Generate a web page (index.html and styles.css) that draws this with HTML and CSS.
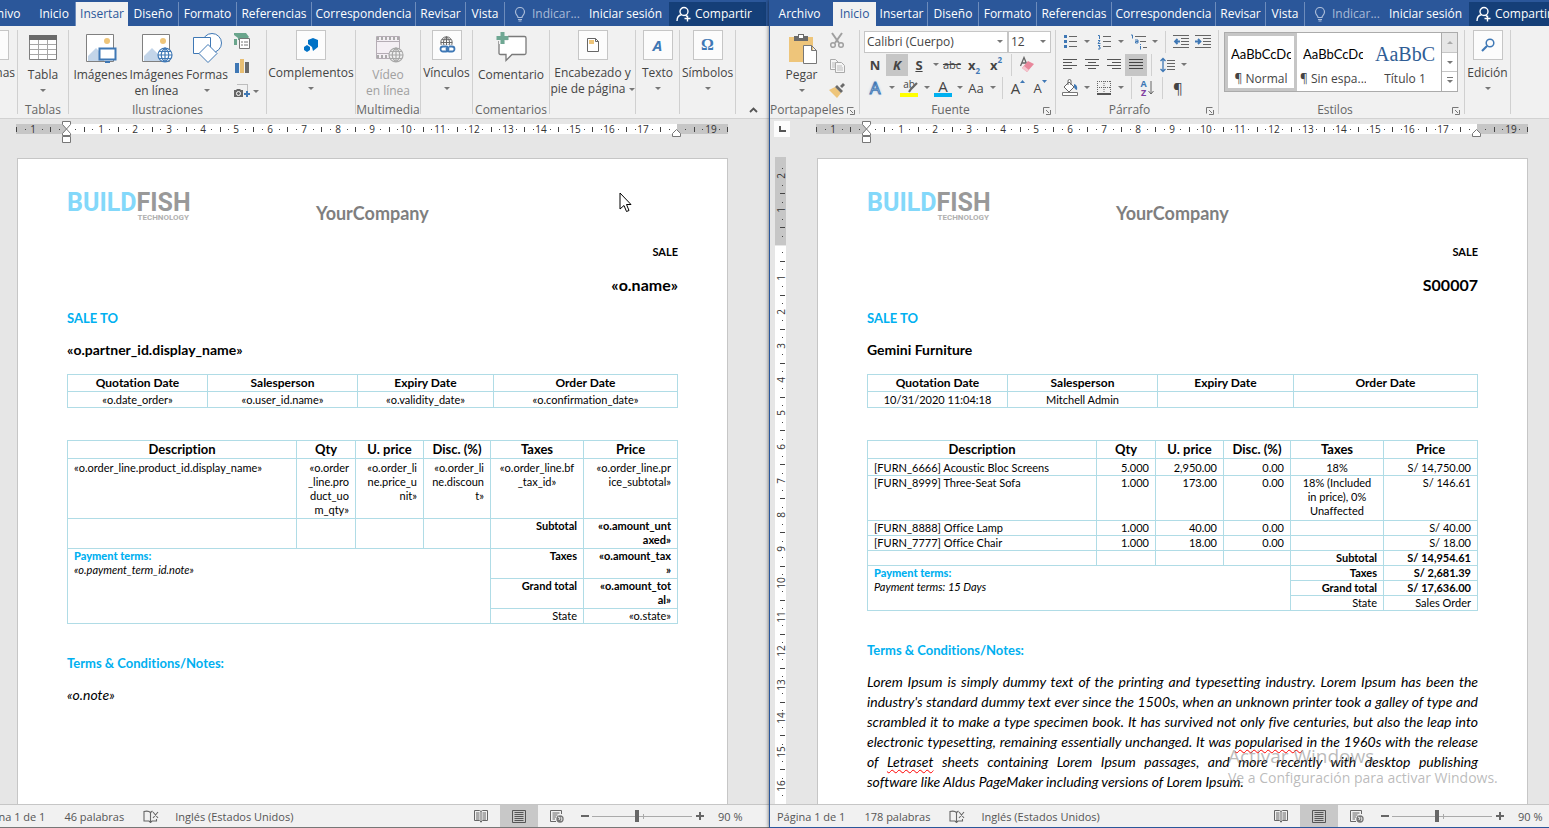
FILE: index.html
```html
<!DOCTYPE html>
<html lang="es">
<head>
    <meta charset="utf-8">
    <title>Word</title>
    <link rel="stylesheet" href="styles.css">
</head>
<body>
    <!-- shared icons -->
    <svg class="defs">
        <symbol id="i-launch" viewBox="0 0 8 8"><path d="M.5 6.500V.5h6M3 3l3 3M7.500 3v4.500H3" fill="none" stroke="#777"/></symbol>
        <symbol id="i-bulb" viewBox="0 0 12 15"><path d="M4 10.500C4 8.500 1.500 8 1.500 5a4.500 4.500 0 0 1 9 0c0 3-2.500 3.500-2.500 5.500zM4 12.500h4M4.500 14h3" fill="none" stroke="#a9bbd8" stroke-width="1.200"/></symbol>
        <symbol id="i-user" viewBox="0 0 16 16"><path d="M1 15c0-4 2-6 5-6.500M8 1.500a4 4 0 1 1 0 8 4 4 0 0 1 0-8M10 9.500l1 1M11.500 9.500v6M8.500 12.500h6" fill="none" stroke="#fff" stroke-width="1.400"/></symbol>
        <symbol id="i-spell" viewBox="0 0 16 13"><path d="M7.500 2.500v9.500M7.500 2.500C6 1 3 1 1 1.500v9.500h5l1.500 1.500L9 11h4.500V9M7.500 2.500L9.500 1M10 2l5 6M15 2l-5 6" fill="none" stroke="#666" stroke-width="1.100"/></symbol>
        <symbol id="i-read" viewBox="0 0 14 13"><path d="M7 1.500v11M7 1.500L5.500.5h-5v10h5L7 12l1.500-1.500h5V.5h-5zM2 3h3.500M2 5h3.500M2 7h3.500M2 9h3.500M8.500 3H12M8.500 5H12M8.500 7H12M8.500 9H12" fill="none" stroke="#666"/></symbol>
        <symbol id="i-print" viewBox="0 0 14 13"><path d="M.5.5h13v12H.5zM2.500 2.500h9M2.500 4.500h9M2.500 6.500h9M2.500 8.500h9M2.500 10.500h9" fill="none" stroke="#555"/></symbol>
        <symbol id="i-web" viewBox="0 0 14 13"><path d="M6 11.500H.5V.5h11V4M2.500 3h7M2.500 5h5M2.500 7H6M2.500 9H5" fill="none" stroke="#666"/><circle cx="10" cy="9" r="3.700" fill="#777"/><path d="M8 7l2 1-1 2M11 7l1 2-1 2" fill="none" stroke="#eee"/></symbol>
        <symbol id="i-globe" viewBox="0 0 16 16"><path d="M8 1a7 7 0 1 1 0 14A7 7 0 0 1 8 1M8 1v14M1 8h14M8 1c-5 4-5 10 0 14M8 1c5 4 5 10 0 14M2.500 4.500h11M2.500 11.500h11" fill="none" stroke="currentColor" stroke-width="1.200"/></symbol>
        <symbol id="i-picture" viewBox="0 0 30 30"><path d="M.5.5h27v27H.5z" fill="#fff" stroke="#808080"/><circle cx="21" cy="7" r="3" fill="#eec57a"/><path d="M2 27v-5l8-8 8 8v5z" fill="#c3d5e9"/></symbol>
    </svg>

    <div class="desktop">
        <section class="window">
            <nav class="tabs">
                <button class="tab file">Archivo</button>
                <button class="tab inicio">Inicio</button>
                <button class="tab insertar active">Insertar</button>
                <button class="tab diseno">Diseño</button>
                <button class="tab formato">Formato</button>
                <button class="tab referencias">Referencias</button>
                <button class="tab correspondencia">Correspondencia</button>
                <button class="tab revisar">Revisar</button>
                <button class="tab vista">Vista</button>
                <button class="tell"><svg width="12" height="15"><use href="#i-bulb"/></svg>Indicar...</button>
                <button class="signin">Iniciar sesión</button>
                <button class="share"><svg width="16" height="16"><use href="#i-user"/></svg>Compartir</button>
            </nav>
            <div class="ribbon">
                <div class="group g-paginas">
                    <button class="big boxed"><span class="box"></span>Páginas<i class="caret"></i></button>
                </div>
                <div class="group g-tablas">
                    <div class="items">
                        <button class="big">
                            <svg width="30" height="32" viewBox="0 0 30 32"><path d="M1.500 8h27v21.500h-27z" fill="#fff" stroke="#808080"/><path d="M1 5h28v5H1z" fill="#6a6a6a"/><path d="M2 14.500h26M2 19.500h26M2 24.500h26M10.500 10v19M19.500 10v19" stroke="#a6a6a6"/></svg>
                            Tabla<i class="caret"></i>
                        </button>
                    </div>
                    <span class="label">Tablas</span>
                </div>
                <div class="group g-ilustraciones">
                    <div class="items">
                        <button class="big wide">
                            <svg width="32" height="32" viewBox="0 0 32 32"><use href="#i-picture" x="1" y="4" width="30" height="30"/><path d="M14.500 18.500h16v11h-16z" fill="#fff" stroke="#3f78b5" stroke-width="2"/><path d="M20 32h5" stroke="#3f78b5" stroke-width="2"/></svg>
                            Imágenes
                        </button>
                        <button class="big wide">
                            <svg width="32" height="32" viewBox="0 0 32 32"><use href="#i-picture" x="1" y="4" width="30" height="30"/><circle cx="24" cy="25" r="7" fill="#fff"/><use href="#i-globe" x="16" y="17" width="16" height="16" color="#3f78b5"/></svg>
                            Imágenes<br>en línea
                        </button>
                        <button class="big formas">
                            <svg width="32" height="32" viewBox="0 0 32 32"><circle cx="21" cy="13" r="9.500" fill="#fff" stroke="#3f78b5"/><path d="M2.500 7.500h17v16h-17z" fill="#fff" stroke="#3f78b5"/><path d="M17 14.500l9 9-9 9-9-9z" fill="#fff" stroke="#3f78b5"/></svg>
                            Formas<i class="caret"></i>
                        </button>
                        <div class="stack">
                            <button><svg width="18" height="18" viewBox="0 0 18 18"><path d="M1 2h12l3 4-3 3H5V7L1 4zM1 8h3v6H1z" fill="#6aa58c"/><path d="M6.500 7.500h10v10h-10z" fill="#fff" stroke="#777"/><path d="M8 11h2M8 14h2M11 11h4M11 14h4" stroke="#777"/></svg></button>
                            <button><svg width="18" height="18" viewBox="0 0 18 18"><path d="M2 6h4v10H2z" fill="#3f78b5"/><path d="M7 2h4v14H7z" fill="#e8be72"/><path d="M12 5h4v11h-4z" fill="#6a6a6a"/></svg></button>
                            <button><svg width="18" height="18" viewBox="0 0 18 18"><path d="M4.500 2.500h10v8" fill="none" stroke="#888" stroke-dasharray="1 1"/><path d="M1 8h2l1-1h3l1 1h2v7H1z" fill="#666"/><circle cx="5.500" cy="11.500" r="2" fill="#666" stroke="#fff"/><path d="M14 9v6M11 12h6" stroke="#3f78b5" stroke-width="2"/></svg><i class="caret"></i></button>
                        </div>
                    </div>
                    <span class="label">Ilustraciones</span>
                </div>
                <div class="group g-complementos">
                    <button class="big boxed">
                        <span class="box"><svg width="16" height="16" viewBox="0 0 16 16"><path d="M5 3l5-2 5 2v7l-5 4-1-4-4-3z" fill="#0072c6"/><path d="M1 10l3-2 3 2v3l-3 2-3-2z" fill="#0072c6"/></svg></span>
                        Complementos<i class="caret"></i>
                    </button>
                </div>
                <div class="group g-multimedia">
                    <div class="items">
                        <button class="big" disabled>
                            <svg width="32" height="32" viewBox="0 0 32 32"><path d="M4.500 6.500h23v22h-23z" fill="#f4eff4" stroke="#b5adb5"/><path d="M5 8.500h22M5 26.500h12" stroke="#aaa" stroke-width="3" stroke-dasharray="2 2"/><path d="M5 11.500h22M5 23.500h12" stroke="#b5adb5"/><circle cx="24" cy="25" r="7" fill="#f1f1f1"/><use href="#i-globe" x="16" y="17" width="16" height="16" color="#a8a8a8"/></svg>
                            Vídeo<br>en línea
                        </button>
                    </div>
                    <span class="label">Multimedia</span>
                </div>
                <div class="group g-vinculos">
                    <button class="big boxed">
                        <span class="box"><svg width="18" height="18" viewBox="0 0 18 18"><use href="#i-globe" x="2" y="0" width="13" height="13" color="#666"/><path d="M1 9h16v9H1z" fill="#fff"/><path d="M5 10.500h3a2.500 2.500 0 0 1 0 5H5a2.500 2.500 0 0 1 0-5M11 10.500h3a2.500 2.500 0 0 1 0 5h-3a2.500 2.500 0 0 1-2-4" fill="none" stroke="#3f78b5" stroke-width="1.800"/></svg></span>
                        Vínculos<i class="caret"></i>
                    </button>
                </div>
                <div class="group g-comentarios">
                    <div class="items">
                        <button class="big">
                            <svg width="32" height="32" viewBox="0 0 32 32"><path d="M5.500 6.500h24q1.500 0 1.500 1.500v15q0 1.500-1.500 1.500H17l-6 6v-6H5.500Q4 24.500 4 23V8q0-1.500 1.500-1.500z" fill="#fff" stroke="#7a7a7a" stroke-width="1.300"/><path d="M7 2v12M1 8h12" stroke="#f1f1f1" stroke-width="6"/><path d="M7.500 2v12M1.500 8h12" stroke="#6fa793" stroke-width="4"/></svg>
                            Comentario
                        </button>
                    </div>
                    <span class="label">Comentarios</span>
                </div>
                <div class="group g-encabezado">
                    <button class="big boxed">
                        <span class="box"><svg width="12" height="16" viewBox="0 0 12 16"><path d="M.5 1.500h8l3 3v10H.5zM8.500 1.500v3h3" fill="#fff" stroke="#666"/><path d="M2 3h5v4H2z" fill="#eec57a"/></svg></span>
                        <span>Encabezado y<br>pie de página <i class="caret inline"></i></span>
                    </button>
                </div>
                <div class="group g-texto">
                    <button class="big boxed"><span class="box glyph-a">A</span>Texto<i class="caret"></i></button>
                </div>
                <div class="group g-simbolos">
                    <button class="big boxed"><span class="box glyph-omega">Ω</span>Símbolos<i class="caret"></i></button>
                </div>
                <button class="collapse"><svg width="9" height="6" viewBox="0 0 9 6"><path d="M1 5l3.500-3.500L8 5" fill="none" stroke="#555" stroke-width="1.800"/></svg></button>
            </div>
            <div class="ruler-bar">
                <span class="tab-stop"></span>
                <svg class="ruler" width="712" height="23"></svg>
            </div>
            <main class="workspace">
                <div class="side"></div>
                <article class="page">
                    <header class="doc-head">
                        <div class="logo"><b>BUILD</b><b class="fish">FISH</b><small>TECHNOLOGY</small></div>
                        <h1>YourCompany</h1>
                    </header>
                    <p class="kind">SALE</p>
                    <p class="number">«o.name»</p>
                    <h2>SALE TO</h2>
                    <p class="partner">«o.partner_id.display_name»</p>
                    <table class="dates">
                        <colgroup><col class="d1"><col class="d2"><col class="d3"><col></colgroup>
                        <tr><th>Quotation Date</th><th>Salesperson</th><th>Expiry Date</th><th>Order Date</th></tr>
                        <tr><td>«o.date_order»</td><td>«o.user_id.name»</td><td>«o.validity_date»</td><td>«o.confirmation_date»</td></tr>
                    </table>
                    <table class="lines">
                        <colgroup><col class="c1"><col class="c2"><col class="c3"><col class="c4"><col class="c5"><col></colgroup>
                        <tr><th>Description</th><th>Qty</th><th>U. price</th><th>Disc. (%)</th><th>Taxes</th><th>Price</th></tr>
                        <tr class="first tall"><td>«o.order_line.product_id.display_name»</td><td>«o.order<br>_line.pro<br>duct_uo<br>m_qty»</td><td>«o.order_li<br>ne.price_u<br>nit»</td><td>«o.order_li<br>ne.discoun<br>t»</td><td class="tax">«o.order_line.bf<br>_tax_id»</td><td>«o.order_line.pr<br>ice_subtotal»</td></tr>
                        <tr class="double total"><td></td><td></td><td></td><td></td><td>Subtotal</td><td>«o.amount_unt<br>axed»</td></tr>
                        <tr class="double total"><td colspan="4" rowspan="4" class="terms"><b>Payment terms:</b><br><i>«o.payment_term_id.note»</i></td><td>Taxes</td><td>«o.amount_tax<br>»</td></tr>
                        <tr class="double total"><td>Grand total</td><td>«o.amount_tot<br>al»</td></tr>
                        <tr><td>State</td><td>«o.state»</td></tr>
                    </table>
                    <h2 class="notes">Terms &amp; Conditions/Notes:</h2>
                    <p class="note">«o.note»</p>
                </article>
                <svg class="pointer" width="13" height="20" viewBox="0 0 13 20"><path d="M1 1v16l4-3.500 2.500 6 2.500-1-2.500-6H12z" fill="#fff" stroke="#000"/></svg>
            </main>
            <footer class="status">
                <span>Página 1 de 1</span>
                <span>46 palabras</span>
                <svg width="16" height="13"><use href="#i-spell"/></svg>
                <span>Inglés (Estados Unidos)</span>
                <div class="views">
                    <button><svg width="14" height="13"><use href="#i-read"/></svg></button>
                    <button class="on"><svg width="14" height="13"><use href="#i-print"/></svg></button>
                    <button><svg width="14" height="13"><use href="#i-web"/></svg></button>
                </div>
                <button class="zoom-btn minus"></button>
                <input type="range" class="zoom" min="10" max="190" value="90" aria-label="Zoom">
                <button class="zoom-btn plus"></button>
                <span class="percent">90 %</span>
            </footer>
        </section>

        <section class="window front">
            <nav class="tabs">
                <button class="tab file">Archivo</button>
                <button class="tab inicio active">Inicio</button>
                <button class="tab insertar">Insertar</button>
                <button class="tab diseno">Diseño</button>
                <button class="tab formato">Formato</button>
                <button class="tab referencias">Referencias</button>
                <button class="tab correspondencia">Correspondencia</button>
                <button class="tab revisar">Revisar</button>
                <button class="tab vista">Vista</button>
                <button class="tell"><svg width="12" height="15"><use href="#i-bulb"/></svg>Indicar...</button>
                <button class="signin">Iniciar sesión</button>
                <button class="share"><svg width="16" height="16"><use href="#i-user"/></svg>Compartir</button>
            </nav>
            <div class="ribbon">
                <div class="group has-launch g-portapapeles">
                    <div class="items">
                        <button class="big pegar">
                            <svg width="32" height="32" viewBox="0 0 32 32"><path d="M3 7h24v25H3z" fill="#eec57a"/><path d="M8 6h4V4h6v2h4v5H8z" fill="#6a6a6a"/><path d="M13 5h4v3h-4z" fill="#fff"/><path d="M17.500 15.500h8l5 5v13h-13zM25.500 15.500v5h5" fill="#fff" stroke="#777"/></svg>
                            Pegar<i class="caret"></i>
                        </button>
                        <div class="stack clip">
                            <button><svg width="16" height="18" viewBox="0 0 16 18"><path d="M3 2l7 10M13 2L6 12" stroke="#a0a0a0" stroke-width="2"/><circle cx="4" cy="14" r="2.300" fill="none" stroke="#a0a0a0" stroke-width="1.500"/><circle cx="12" cy="14" r="2.300" fill="none" stroke="#a0a0a0" stroke-width="1.500"/></svg></button>
                            <button><svg width="16" height="16" viewBox="0 0 16 16"><path d="M1.500 1.500h5l3 3v7h-8z" fill="#f6f6f6" stroke="#aaa"/><path d="M3 5h3M3 7h3M3 9h3" stroke="#bbb"/><path d="M6.500 4.500h6l3 3v7h-9z" fill="#f6f6f6" stroke="#aaa"/><path d="M8 8h5M8 10h6M8 12h6" stroke="#bbb"/></svg></button>
                            <button><svg width="16" height="16" viewBox="0 0 16 16"><path d="M0 8l6-3 6 6-4 5z" fill="#eec57a"/><path d="M6 5l2-2 6 6-2 2zM11 4l3-3 2 2-3 3z" fill="#6a6a6a"/></svg></button>
                        </div>
                    </div>
                    <span class="label">Portapapeles</span>
                    <svg class="launch" width="8" height="8"><use href="#i-launch"/></svg>
                </div>
                <div class="group has-launch g-fuente">
                    <div class="row combos">
                        <label class="combo font-name"><input type="text" value="Calibri (Cuerpo)" aria-label="Fuente"><i class="caret"></i></label>
                        <label class="combo font-size"><input type="text" value="12" aria-label="Tamaño"><i class="caret"></i></label>
                    </div>
                    <div class="row">
                        <button class="t bold">N</button>
                        <button class="t bold on"><em>K</em></button>
                        <button class="t bold"><u>S</u></button>
                        <button class="drop"><i class="caret"></i></button>
                        <button class="t strike"><s>abc</s></button>
                        <button class="t bold">x<sub>2</sub></button>
                        <button class="t bold">x<sup>2</sup></button>
                        <span class="bar"></span>
                        <button class="t"><svg width="16" height="18" viewBox="0 0 16 18"><path d="M1.500 10L5 1.500 8.500 10M3 7h4" fill="none" stroke="#666" stroke-width="1.300"/><path d="M3 12l6-7 6 3-7 8z" fill="#e8879b"/><path d="M3 12l2-2 5 4-2 2z" fill="#f4c4cd"/></svg></button>
                    </div>
                    <div class="row">
                        <button class="t effect">A</button>
                        <button class="drop"><i class="caret"></i></button>
                        <button class="t mark"><span>ab</span><svg width="10" height="11" viewBox="0 0 10 11"><path d="M1 10l2-3 6-6" stroke="#666" stroke-width="2.200" fill="none"/></svg></button>
                        <button class="drop"><i class="caret"></i></button>
                        <button class="t color">A</button>
                        <button class="drop"><i class="caret"></i></button>
                        <button class="t">Aa</button>
                        <button class="drop"><i class="caret"></i></button>
                        <span class="bar"></span>
                        <button class="t grow">A<svg width="5" height="3" viewBox="0 0 5 3"><path d="M0 3L2.500 0 5 3z" fill="#3f78b5"/></svg></button>
                        <button class="t shrink">A<svg width="5" height="3" viewBox="0 0 5 3"><path d="M0 0l2.500 3L5 0z" fill="#3f78b5"/></svg></button>
                    </div>
                    <span class="label">Fuente</span>
                    <svg class="launch" width="8" height="8"><use href="#i-launch"/></svg>
                </div>
                <div class="group has-launch g-parrafo">
                    <div class="row">
                        <button class="t"><svg width="15" height="15" viewBox="0 0 15 15"><path d="M1 2.500h3M1 7.500h3M1 12.500h3" stroke="#3f78b5" stroke-width="3"/><path d="M6 2.500h8M6 7.500h8M6 12.500h8" stroke="#666"/></svg></button>
                        <button class="drop"><i class="caret"></i></button>
                        <button class="t"><svg width="15" height="16" viewBox="0 0 15 16"><path d="M1 1.500h1.500V5M1 6.500h2L1 9.500h2.500M1 11.500h2l-1 1.500h1v2H1" fill="none" stroke="#3f78b5"/><path d="M6 2.500h8M6 7.500h8M6 12.500h8" stroke="#666"/></svg></button>
                        <button class="drop"><i class="caret"></i></button>
                        <button class="t"><svg width="17" height="16" viewBox="0 0 17 16"><path d="M1 1h1.500v3.500M5 6h3v3H5.500V7.500H8M10.500 10v1M10.500 12v3.500" fill="none" stroke="#3f78b5"/><path d="M5 2.500h11M10 7.500h6M13 13.500h4" stroke="#666"/></svg></button>
                        <button class="drop"><i class="caret"></i></button>
                        <span class="bar"></span>
                        <button class="t"><svg width="16" height="15" viewBox="0 0 16 15"><path d="M0 1.500h16M8 4.500h8M8 7.500h8M8 10.500h8M0 13.500h16" stroke="#666"/><path d="M7 7.500H2M4.500 5L2 7.500 4.500 10" fill="none" stroke="#3f78b5" stroke-width="1.800"/></svg></button>
                        <button class="t"><svg width="16" height="15" viewBox="0 0 16 15"><path d="M0 1.500h16M8 4.500h8M8 7.500h8M8 10.500h8M0 13.500h16" stroke="#666"/><path d="M0 7.500h5M3 5l2.500 2.500L3 10" fill="none" stroke="#3f78b5" stroke-width="1.800"/></svg></button>
                    </div>
                    <div class="row">
                        <button class="t"><svg width="14" height="11" viewBox="0 0 14 11"><path d="M0 .5h14M0 3.500h9M0 6.500h14M0 9.500h9" stroke="#555"/></svg></button>
                        <button class="t"><svg width="14" height="11" viewBox="0 0 14 11"><path d="M0 .5h14M3 3.500h8M0 6.500h14M3 9.500h8" stroke="#555"/></svg></button>
                        <button class="t"><svg width="14" height="11" viewBox="0 0 14 11"><path d="M0 .5h14M5 3.500h9M0 6.500h14M5 9.500h9" stroke="#555"/></svg></button>
                        <button class="t on"><svg width="14" height="11" viewBox="0 0 14 11"><path d="M0 .5h14M0 3.500h14M0 6.500h14M0 9.500h14" stroke="#444"/></svg></button>
                        <span class="bar"></span>
                        <button class="t"><svg width="15" height="16" viewBox="0 0 15 16"><path d="M3 1v14M.5 4L3 1.500 5.500 4M.5 12L3 14.500 5.500 12" fill="none" stroke="#3f78b5" stroke-width="1.300"/><path d="M7 3.500h8M7 6.500h8M7 9.500h8M7 12.500h8" stroke="#666"/></svg></button>
                        <button class="drop"><i class="caret"></i></button>
                    </div>
                    <div class="row">
                        <button class="t"><svg width="17" height="17" viewBox="0 0 17 17"><path d="M2 8l5-5 5 5-5 5zM6 6V2q0-1.500 1.500-1.500T9 2v4" fill="#fff" stroke="#666"/><path d="M12 5q4 1 3 6-3-1-3-4z" fill="#3f78b5"/><path d="M.5 13.500h15v3H.5z" fill="#fff" stroke="#777"/></svg></button>
                        <button class="drop"><i class="caret"></i></button>
                        <button class="t"><svg width="14" height="14" viewBox="0 0 14 14"><path d="M.5 0v12M13.500 0v12M7 0v12M0 .5h14M0 6.500h14" fill="none" stroke="#666" stroke-dasharray="1 1"/><path d="M0 13h14" stroke="#555" stroke-width="2"/></svg></button>
                        <button class="drop"><i class="caret"></i></button>
                        <span class="bar"></span>
                        <button class="t sort"><span>A<br><em>Z</em></span><svg width="6" height="14" viewBox="0 0 6 14"><path d="M3 0v13M.5 10L3 13l2.500-3" fill="none" stroke="#666"/></svg></button>
                        <span class="bar"></span>
                        <button class="t pilcrow">¶</button>
                    </div>
                    <span class="label">Párrafo</span>
                    <svg class="launch" width="8" height="8"><use href="#i-launch"/></svg>
                </div>
                <div class="group has-launch g-estilos">
                    <div class="gallery">
                        <button class="style on"><span>AaBbCcDc</span>¶ Normal</button>
                        <button class="style"><span>AaBbCcDc</span>¶ Sin espa...</button>
                        <button class="style title"><span>AaBbC</span>Título 1</button>
                        <div class="scroll">
                            <button class="off"><i class="caret up"></i></button>
                            <button><i class="caret"></i></button>
                            <button><i class="caret more"></i></button>
                        </div>
                    </div>
                    <span class="label">Estilos</span>
                    <svg class="launch" width="8" height="8"><use href="#i-launch"/></svg>
                </div>
                <div class="group g-edicion">
                    <button class="big boxed">
                        <span class="box"><svg width="14" height="14" viewBox="0 0 14 14"><circle cx="9" cy="5" r="3.800" fill="none" stroke="#3f78b5" stroke-width="1.500"/><path d="M6 8l-5 5" stroke="#3f78b5" stroke-width="2.200"/></svg></span>
                        Edición<i class="caret"></i>
                    </button>
                </div>
            </div>
            <div class="ruler-bar">
                <span class="tab-stop"><svg width="16" height="16" viewBox="0 0 16 16"><path d="M0 0h16v16H0z" fill="#fcfcfc"/><path d="M6 5v5h6" fill="none" stroke="#555" stroke-width="2"/></svg></span>
                <svg class="ruler" width="712" height="23"></svg>
            </div>
            <main class="workspace">
                <div class="side"><svg class="vruler" width="12" height="648"></svg></div>
                <article class="page">
                    <header class="doc-head">
                        <div class="logo"><b>BUILD</b><b class="fish">FISH</b><small>TECHNOLOGY</small></div>
                        <h1>YourCompany</h1>
                    </header>
                    <p class="kind">SALE</p>
                    <p class="number">S00007</p>
                    <h2>SALE TO</h2>
                    <p class="partner">Gemini Furniture</p>
                    <table class="dates">
                        <colgroup><col class="d1"><col class="d2"><col class="d3"><col></colgroup>
                        <tr><th>Quotation Date</th><th>Salesperson</th><th>Expiry Date</th><th>Order Date</th></tr>
                        <tr><td>10/31/2020 11:04:18</td><td>Mitchell Admin</td><td></td><td></td></tr>
                    </table>
                    <table class="lines">
                        <colgroup><col class="c1"><col class="c2"><col class="c3"><col class="c4"><col class="c5"><col></colgroup>
                        <tr><th>Description</th><th>Qty</th><th>U. price</th><th>Disc. (%)</th><th>Taxes</th><th>Price</th></tr>
                        <tr class="first"><td>[FURN_6666] Acoustic Bloc Screens</td><td>5.000</td><td>2,950.00</td><td>0.00</td><td class="tax">18%</td><td>S/ 14,750.00</td></tr>
                        <tr class="triple"><td>[FURN_8999] Three-Seat Sofa</td><td>1.000</td><td>173.00</td><td>0.00</td><td class="tax">18% (Included<br>in price), 0%<br>Unaffected</td><td>S/ 146.61</td></tr>
                        <tr><td>[FURN_8888] Office Lamp</td><td>1.000</td><td>40.00</td><td>0.00</td><td></td><td>S/ 40.00</td></tr>
                        <tr><td>[FURN_7777] Office Chair</td><td>1.000</td><td>18.00</td><td>0.00</td><td></td><td>S/ 18.00</td></tr>
                        <tr class="total"><td></td><td></td><td></td><td></td><td>Subtotal</td><td>S/ 14,954.61</td></tr>
                        <tr class="total"><td colspan="4" rowspan="4" class="terms"><b>Payment terms:</b><br><i>Payment terms: 15 Days</i></td><td>Taxes</td><td>S/ 2,681.39</td></tr>
                        <tr class="total"><td>Grand total</td><td>S/ 17,636.00</td></tr>
                        <tr><td>State</td><td>Sales Order</td></tr>
                    </table>
                    <h2 class="notes">Terms &amp; Conditions/Notes:</h2>
                    <p class="note lorem">
                        <span>Lorem Ipsum is simply dummy text of the printing and typesetting industry. Lorem Ipsum has been the</span>
                        <span>industry's standard dummy text ever since the 1500s, when an unknown printer took a galley of type and</span>
                        <span>scrambled it to make a type specimen book. It has survived not only five centuries, but also the leap into</span>
                        <span>electronic typesetting, remaining essentially unchanged. It was <u>popularised</u> in the 1960s with the release</span>
                        <span>of <u>Letraset</u> sheets containing Lorem Ipsum passages, and more recently with desktop publishing</span>
                        <span>software like Aldus PageMaker including versions of Lorem Ipsum.</span>
                    </p>
                </article>
            </main>
            <footer class="status">
                <span>Página 1 de 1</span>
                <span>178 palabras</span>
                <svg width="16" height="13"><use href="#i-spell"/></svg>
                <span>Inglés (Estados Unidos)</span>
                <div class="views">
                    <button><svg width="14" height="13"><use href="#i-read"/></svg></button>
                    <button class="on"><svg width="14" height="13"><use href="#i-print"/></svg></button>
                    <button><svg width="14" height="13"><use href="#i-web"/></svg></button>
                </div>
                <button class="zoom-btn minus"></button>
                <input type="range" class="zoom" min="10" max="190" value="90" aria-label="Zoom">
                <button class="zoom-btn plus"></button>
                <span class="percent">90 %</span>
            </footer>
        </section>
    </div>
    <div class="activate">
        <p>Activar Windows</p>
        <small>Ve a Configuración para activar Windows.</small>
    </div>
    <script src="rulers.js"></script>
</body>
</html>
```
FILE: styles.css
```css
* {
    box-sizing: border-box;
}
body {
    margin: 0;
    height: 100vh;
    overflow: hidden;
    position: relative;
    background: #e6e6e6;
    font-family: "Open Sans", "Noto Sans", sans-serif;
    font-size: 12px;
    color: #444;
}
p, h1, h2 {
    margin: 0;
}
button {
    border: 0;
    padding: 0;
    margin: 0;
    background: none;
    font: inherit;
    color: inherit;
    white-space: nowrap;
}
svg {
    flex: none;
}
.defs {
    display: none;
}

/* both windows run past the edges of the screen */
.desktop {
    display: flex;
    height: 100%;
    margin: 0 -20px 0 -31px;
}
.window {
    flex: 1;
    min-width: 0;
    display: flex;
    flex-direction: column;
    border-left: 1px solid #2b579a;
    border-bottom: 1px solid #777;
    background: #e6e6e6;
}
.front {
    border-bottom-color: #2b579a;
    box-shadow: 0 0 4px rgba(0, 0, 0, 0.6);
    z-index: 1;
}

/* tabs */
.tabs {
    display: flex;
    height: 26px;
    padding-top: 2px;
    background: #2b579a;
    color: #fff;
    line-height: 24px;
}
.tab {
    border-right: 1px solid #6d8cbc;
}
.tab.file, .tab.active {
    border-right: 0;
}
.tab.active {
    background: #f1f1f1;
    color: #2b579a;
}
.file { width: 63px; padding-right: 4px; }
.inicio { width: 43px; }
.insertar { width: 52px; }
.diseno { width: 51px; }
.formato { width: 58px; }
.referencias { width: 75px; }
.correspondencia { width: 104px; }
.revisar { width: 50px; }
.vista { width: 39px; }
.tell {
    display: flex;
    align-items: center;
    gap: 6px;
    padding-left: 9px;
    width: 77px;
    color: #a9bbd8;
}
.signin {
    width: 87px;
}
.share {
    display: flex;
    align-items: center;
    gap: 3px;
    padding-left: 7px;
    flex: 1;
    margin-right: 3px;
    background: #153f78;
}

/* ribbon */
.ribbon {
    display: flex;
    height: 93px;
    background: #f1f1f1;
    border-bottom: 1px solid #d2d2d2;
}
.group {
    position: relative;
    flex: none;
    padding: 4px 1px 0 0;
    display: flex;
    flex-direction: column;
}
.group::after {
    content: "";
    position: absolute;
    right: 0;
    top: 4px;
    bottom: 4px;
    width: 1px;
    background: #d0d0d0;
}
.g-paginas { width: 48px; }
.g-tablas { width: 51px; }
.g-ilustraciones { width: 198px; }
.g-complementos { width: 89px; }
.g-multimedia { width: 65px; }
.g-vinculos { width: 52px; }
.g-comentarios { width: 77px; }
.g-encabezado { width: 86px; }
.g-texto { width: 44px; }
.g-simbolos { width: 56px; }
.g-portapapeles { width: 90px; }
.g-fuente { width: 196px; padding-left: 4px; }
.g-parrafo { width: 163px; padding-left: 3px; }
.g-estilos { width: 246px; padding-left: 5px; }
.g-edicion { width: 46px; }
.items {
    display: flex;
    justify-content: center;
    height: 73px;
}
.label {
    margin-top: auto;
    height: 15px;
    line-height: 14px;
    text-align: center;
    color: #666;
}
.has-launch .label {
    padding-right: 18px;
}
.launch {
    position: absolute;
    right: 5px;
    bottom: 3px;
}
.big {
    display: flex;
    flex-direction: column;
    align-items: center;
    line-height: 16px;
}
.big > svg {
    margin-bottom: 5px;
    overflow: visible;
}
.big:disabled {
    color: #a0a0a0;
}
.big.wide { width: 56px; }
.big.formas { width: 45px; }
.big.pegar { width: 54px; }
.box {
    display: flex;
    align-items: center;
    justify-content: center;
    width: 30px;
    height: 30px;
    margin-bottom: 5px;
    border: 1px solid #c6c6c6;
    background: #fcfcfc;
}
.glyph-a {
    font: italic bold 15px "Noto Sans", sans-serif;
    color: #3f78b5;
}
.glyph-omega {
    font: bold 16px "Liberation Serif", serif;
    color: #3f78b5;
}
.caret {
    display: block;
    border: 3px solid transparent;
    border-top-color: #777;
    border-bottom: 0;
}
.big > .caret {
    margin-top: 6px;
}
.caret.inline {
    display: inline-block;
    vertical-align: middle;
}
.stack {
    display: flex;
    flex-direction: column;
    justify-content: space-between;
    padding: 1px 0 3px 3px;
    width: 33px;
}
.stack button {
    display: flex;
    align-items: center;
    gap: 2px;
}
.stack.clip {
    padding: 1px 0 5px 0;
    width: 26px;
}
.collapse {
    display: flex;
    margin: 0 auto 5px 13px;
    align-self: flex-end;
}

/* font and paragraph rows */
.row {
    display: flex;
    align-items: center;
    height: 23px;
}
.t {
    display: flex;
    align-items: center;
    justify-content: center;
    width: 22px;
    height: 22px;
    font-size: 13px;
}
.t.bold {
    font-weight: bold;
}
.t.on {
    background: #c6c6c6;
}
.t sub, .t sup {
    font-size: 8px;
    color: #3f78b5;
}
.t sub { align-self: flex-end; }
.t sup { align-self: flex-start; }
.strike {
    font-size: 11px;
}
.drop {
    display: flex;
    justify-content: center;
    width: 11px;
}
.bar {
    width: 1px;
    height: 22px;
    margin: 0 4px;
    background: #d0d0d0;
}
.combo {
    display: flex;
    align-items: center;
    height: 22px;
    padding-right: 4px;
    border: 1px solid #c6c6c6;
    background: #fff;
}
.combo input {
    min-width: 0;
    flex: 1;
    border: 0;
    padding: 0 0 0 2px;
    outline: 0;
    font: inherit;
    color: #444;
    background: none;
}
.font-name { width: 144px; }
.font-size { width: 43px; }
.effect {
    font-size: 17px;
    color: #fff;
    -webkit-text-stroke: 1px #3f78b5;
    text-shadow: 0 0 3px #8db4e0;
}
.mark {
    position: relative;
    height: 18px;
    align-items: flex-start;
    border-bottom: 4px solid #ff0;
    font-size: 10px;
    line-height: 11px;
    width: 18px;
    margin: 0 3px;
}
.mark svg {
    position: absolute;
    right: 0;
    bottom: 0;
}
.color {
    height: 18px;
    width: 18px;
    margin: 0 2px;
    border-bottom: 4px solid #00b0f0;
    font-size: 15px;
    line-height: 14px;
}
.grow { font-size: 15px; }
.shrink { font-size: 13px; }
.grow svg, .shrink svg {
    align-self: flex-start;
    margin-top: 3px;
}
.sort {
    font-size: 9px;
    line-height: 9px;
    font-weight: bold;
    color: #3f78b5;
    gap: 1px;
}
.sort em {
    font-style: normal;
    color: #8040a0;
}
.pilcrow {
    font-size: 15px;
}
.g-parrafo .drop {
    width: 12px;
}

/* style gallery */
.gallery {
    display: flex;
    width: 234px;
    height: 60px;
    margin-top: 2px;
    border: 1px solid #ababab;
    background: #fff;
}
.style {
    width: 72px;
    overflow: hidden;
    border: 3px solid transparent;
    line-height: 16px;
}
.style.on {
    border-color: #c6c6c6;
}
.style span {
    display: block;
    overflow: hidden;
    height: 34px;
    margin: 0 3px;
    line-height: 34px;
    text-align: left;
    font-family: Lato, sans-serif;
    font-size: 13px;
    color: #000;
}
.style.title span {
    font-family: "Liberation Serif", serif;
    font-size: 20px;
    color: #2f5d95;
}
.scroll {
    display: flex;
    flex-direction: column;
    flex: 1;
    border-left: 1px solid #ababab;
}
.scroll button {
    flex: 1;
    display: flex;
    align-items: center;
    justify-content: center;
    border-bottom: 1px solid #c6c6c6;
}
.scroll button:last-child {
    border-bottom: 0;
}
.scroll .off {
    background: #e6e6e6;
}
.caret.up {
    border: 3px solid transparent;
    border-bottom-color: #aaa;
    border-top: 0;
}
.caret.more {
    position: relative;
}
.caret.more::before {
    content: "";
    position: absolute;
    left: -3px;
    top: -6px;
    width: 6px;
    height: 1px;
    background: #777;
}

/* rulers */
.ruler-bar {
    display: flex;
    height: 38px;
    padding-top: 2px;
}
.tab-stop {
    width: 46px;
    padding-left: 4px;
}
.ruler text, .vruler text {
    font-size: 10px;
    text-anchor: middle;
    fill: #333;
}

/* document */
.workspace {
    position: relative;
    flex: 1;
    min-height: 0;
    overflow: hidden;
    display: flex;
    padding-right: 41px;
}
.side {
    flex: none;
    width: 47px;
    padding-left: 5px;
}
.page {
    flex: 1;
    margin-top: 1px;
    padding: 30px 49px 0;
    border: 1px solid #c6c6c6;
    border-bottom: 0;
    background: #fff;
    color: #000;
    font-family: Lato, Carlito, sans-serif;
    font-size: 14px;
    line-height: 20px;
    font-variant-ligatures: none;
}
.doc-head {
    display: flex;
    gap: 127px;
    height: 53px;
}
.logo {
    width: 122px;
    padding-top: 2px;
    font-family: Roboto, sans-serif;
    font-size: 25px;
    line-height: 23px;
    color: #83d8fa;
}
.logo .fish {
    color: #999;
}
.logo small {
    display: block;
    font-size: 8px;
    line-height: 8px;
    font-weight: bold;
    text-align: right;
    color: #b0b0b0;
}
h1 {
    padding-top: 14px;
    font-size: 18px;
    line-height: 20px;
    color: #7f7f7f;
}
.kind {
    text-align: right;
    font-size: 11px;
    font-weight: bold;
}
.number {
    margin-top: 13px;
    text-align: right;
    font-size: 16px;
    font-weight: bold;
}
h2 {
    margin-top: 13px;
    font-size: 13px;
    line-height: 20px;
    color: #00b0f0;
}
.partner {
    margin-top: 12px;
    font-weight: bold;
}
table {
    width: 100%;
    border-collapse: collapse;
    table-layout: fixed;
    font-size: 11px;
    line-height: 14px;
}
th, td {
    border: 1px solid #b0dce6;
    padding: 0 6px;
    height: 15px;
    vertical-align: top;
    white-space: nowrap;
}
.dates {
    margin-top: 14px;
    text-align: center;
}
.dates th {
    height: 17px;
    font-size: 12px;
    line-height: 16px;
}
.dates td {
    height: 16px;
    padding-top: 1px;
}
.d1 { width: 140px; }
.d2 { width: 150px; }
.d3 { width: 136px; }
.lines {
    margin-top: 32px;
    text-align: right;
}
.lines th {
    height: 18px;
    padding: 0;
    font-size: 13px;
    line-height: 17px;
    text-align: center;
}
.lines td:first-child:nth-last-child(6) {
    text-align: left;
}
.lines .tax {
    text-align: center;
}
.lines .terms {
    text-align: left;
}
.lines .first td { padding-top: 2px; }
.lines .tall { height: 60px; }
.lines .double { height: 30px; }
.lines .triple { height: 45px; }
.total {
    font-weight: bold;
}
.terms i {
    font-weight: normal;
}
.terms b {
    color: #00b0f0;
}
.c1 { width: 229px; }
.c2 { width: 59px; }
.c3 { width: 68px; }
.c4 { width: 67px; }
.c5 { width: 93px; }
.notes {
    margin-top: 29px;
}
.note {
    margin-top: 12px;
    font-style: italic;
}
.lorem span {
    display: block;
    text-align: justify;
    text-align-last: justify;
}
.lorem span:last-child {
    text-align-last: left;
}
.lorem u {
    text-decoration: underline wavy #f00 1px;
    text-underline-offset: 2px;
    text-decoration-skip-ink: none;
}
.pointer {
    position: absolute;
    left: 649px;
    top: 35px;
}

/* status bar */
.status {
    display: flex;
    align-items: center;
    height: 23px;
    padding-left: 7px;
    border-top: 1px solid #c6c6c6;
    background: #f1f1f1;
    font-size: 11px;
    color: #555;
    z-index: 1;
}
.status > span {
    margin-right: 19px;
}
.status > svg {
    margin-right: 16px;
}
.views {
    display: flex;
    align-self: stretch;
    margin-left: auto;
}
.views button {
    display: flex;
    align-items: center;
    justify-content: center;
    width: 38px;
}
.views .on {
    background: #c8c8c8;
}
.zoom-btn {
    width: 8px;
    height: 8px;
    background: linear-gradient(#666, #666) center / 8px 2px no-repeat;
}
.minus {
    margin-left: 5px;
}
.zoom-btn.plus {
    background: linear-gradient(#666, #666) center / 8px 2px no-repeat, linear-gradient(#666, #666) center / 2px 8px no-repeat;
}
.zoom {
    appearance: none;
    width: 100px;
    height: 12px;
    margin: 0 4px 0 3px;
    background: linear-gradient(#aaa, #aaa) 51px center / 1px 5px no-repeat, linear-gradient(#aaa, #aaa) center / 100% 1px no-repeat;
}
.zoom::-webkit-slider-thumb {
    appearance: none;
    width: 4px;
    height: 12px;
    background: #666;
}
.status .percent {
    width: 65px;
    margin: 0;
    padding-left: 14px;
}

.activate {
    position: absolute;
    z-index: 2;
    left: 1228px;
    bottom: 40px;
    color: rgba(120, 120, 120, 0.5);
}
.activate p {
    font-size: 19px;
    line-height: 24px;
}
.activate small {
    display: block;
    font-size: 14px;
    line-height: 20px;
}
```
FILE: rulers.js
```javascript
const CM = 610 / 18;

function rect(x, y, w, h, fill) {
    return `<rect x="${x}" y="${y}" width="${w}" height="${h}" fill="${fill}"/>`;
}

// horizontal rulers, 0 cm sits at the left margin
document.querySelectorAll(".ruler").forEach((ruler) => {
    const zero = 51;
    let out = rect(0, 3, zero, 10, "#c6c6c6") + rect(zero, 3, 610, 10, "#fff") + rect(661, 3, 51, 10, "#c6c6c6");
    for (let q = -6; q <= 78; q++) {
        const x = Math.round(zero + (q * CM) / 4);
        if (q === 0 || q === 72) continue;
        if (q % 4 === 0) {
            out += `<text x="${x}" y="12">${Math.abs(q / 4)}</text>`;
        } else if (q % 2 === 0) {
            out += rect(Math.min(x, 711), 6, 1, 5, "#444");
        } else {
            out += rect(x, 8, 1, 1, "#444");
        }
    }
    const handle = 'fill="#fff" stroke="#777"';
    out += `<path d="M46.500 .5h8v3l-4 4.500-4-4.500zM50.500 8l4 4.500v2h-8v-2zM46.500 15.500h8v6h-8z" ${handle}/>`;
    out += `<path d="M656.500 15.500v-3l4-4 4 4v3z" ${handle}/>`;
    ruler.innerHTML = out;
});

// vertical ruler
document.querySelectorAll(".vruler").forEach((ruler) => {
    const zero = 87;
    let out = rect(0, 0, 11, 88, "#c6c6c6") + rect(0, 89, 11, 560, "#fff");
    for (let q = -9; q <= 65; q++) {
        const y = Math.round(zero + (q * CM) / 4);
        if (q === 0) continue;
        if (q % 4 === 0) {
            out += `<text transform="translate(10 ${y}) rotate(-90)">${Math.abs(q / 4)}</text>`;
        } else if (q % 2 === 0) {
            out += rect(5, y, 5, 1, "#444");
        } else {
            out += rect(7, y, 1, 1, "#444");
        }
    }
    ruler.innerHTML = out;
});
```
